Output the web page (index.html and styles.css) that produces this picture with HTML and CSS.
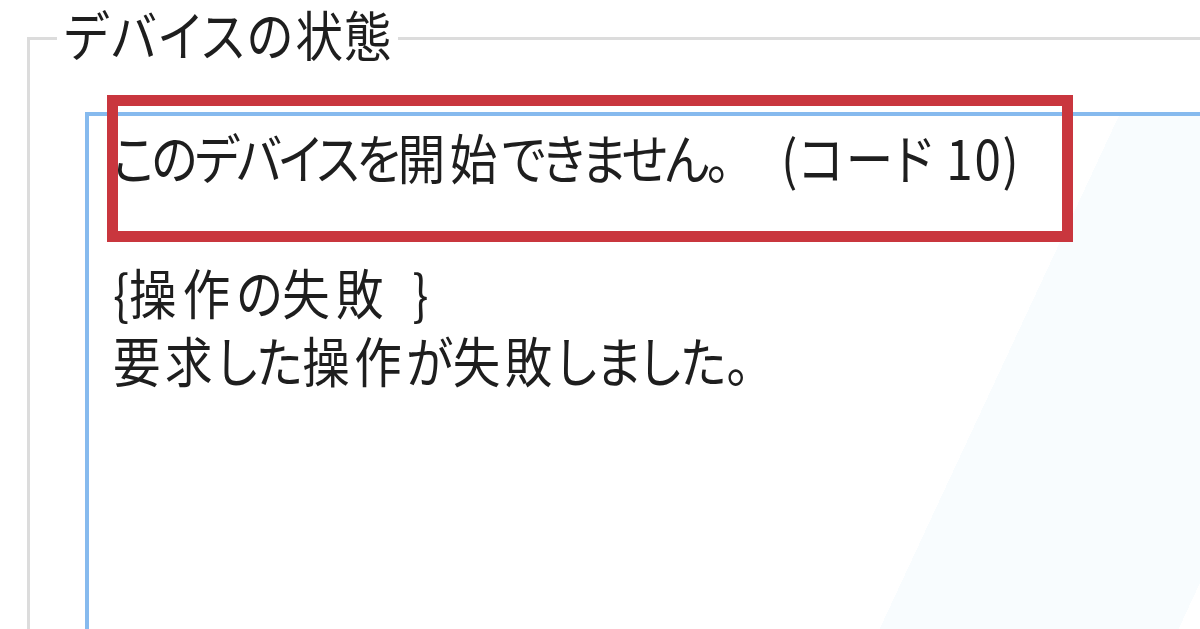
FILE: index.html
```html
<!DOCTYPE html>
<html lang="ja">
<head>
<meta charset="utf-8">
<title>デバイスの状態</title>
<link rel="stylesheet" href="styles.css">
</head>
<body>
<fieldset class="group">
  <legend class="group-title"><span class="narrow title-text">デバイスの<span class="kj">状態</span></span></legend>
  <div class="status-box">
    <p class="status-text"><span class="narrow tight">このデバイスを<span class="kj">開始</span>できません。<span class="code">(コード 10)</span></span></p>
    <p class="status-text">&nbsp;</p>
    <p class="status-text"><span class="narrow wide">{<span class="kj">操作</span>の<span class="kj">失敗</span><span class="close">}</span></span></p>
    <p class="status-text"><span class="narrow"><span class="kj">要求</span>した<span class="kj">操作</span>が<span class="kj">失敗</span>しました。</span></p>
  </div>
</fieldset>
<div class="highlight"></div>
</body>
</html>
```
FILE: styles.css
```css
html, body {
  margin: 0;
  padding: 0;
  width: 1200px;
  height: 629px;
  overflow: hidden;
  background: #ffffff;
}
body {
  position: relative;
  font-family: "Noto Sans CJK JP", "Noto Sans", sans-serif;
  color: #1e1e1e;
  padding-top: 9px;
  box-sizing: border-box;
}
.group {
  margin: 0 0 0 27px;
  padding: 0 0 0 27px;
  border: 3px solid #dcdcdc;
  border-right: none;
  border-bottom: none;
  width: 1300px;
  height: 800px;
  box-sizing: border-box;
}
.group-title {
  padding: 0 9px 8px 7px;
  font-size: 54px;
  line-height: 50px;
}
.narrow {
  display: inline-block;
  transform: scaleX(0.88);
  transform-origin: left center;
  font-feature-settings: "palt" 1;
  letter-spacing: 0;
  filter: blur(0.4px);
}
.tight {
  letter-spacing: -3px;
}
.kj {
  letter-spacing: 5px;
}
.wide .kj {
  letter-spacing: 7px;
}
.title-text {
  margin-right: -48px;
  letter-spacing: 3px;
}
.title-text .kj {
  letter-spacing: 1px;
}
.code {
  margin-left: 61px;
  letter-spacing: 2px;
}
.close {
  margin-left: 26px;
}
.status-box {
  margin: 45px 0 0 28px;
  border: 4px solid #86baee;
  border-right: none;
  border-bottom: none;
  height: 900px;
  padding: 7px 0 0 24px;
  background:
    linear-gradient(115deg, transparent 62%, #f8fcfe 62%, #f8fcfe 80%, transparent 80%),
    #ffffff;
}
.status-text {
  margin: 0;
  font-size: 54px;
  line-height: 67.5px;
  white-space: nowrap;
}
.highlight {
  position: absolute;
  left: 107px;
  top: 95px;
  width: 966px;
  height: 147px;
  box-sizing: border-box;
  border: 11px solid #c9363e;
}
```
